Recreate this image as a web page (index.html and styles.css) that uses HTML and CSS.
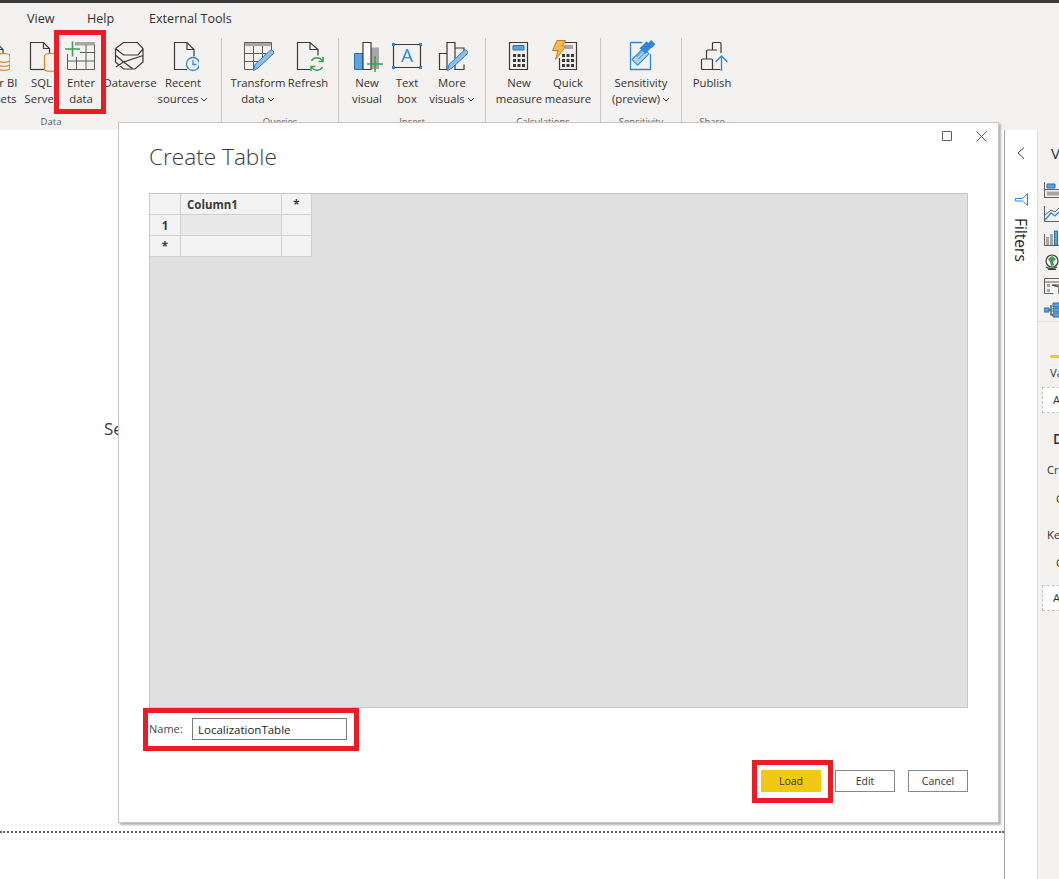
FILE: index.html
```html
<!DOCTYPE html>
<html lang="en">
<head>
  <meta charset="UTF-8" />
  <title>Create Table</title>
  <link rel="stylesheet" href="styles.css">
</head>
<body>
<div class="app">
  <div class="topbar"></div>

  <nav class="tabs">
    <span class="tab tab-view">View</span>
    <span class="tab tab-help">Help</span>
    <span class="tab tab-tools">External Tools</span>
  </nav>

  <div class="ribbon">
    <section class="group group-data">
      <div class="buttons">
        <div class="btn btn-powerbi">
          <svg class="icon" viewBox="0 0 32 32"><path class="ink" d="M6 29.500V2.500h12l7 7v7"/><path class="ink" d="M18 2.500v7h7"/><g class="orange"><ellipse cx="26" cy="16" rx="6" ry="2.500"/><path d="M20 16v12c0 3 12 3 12 0V16M20 20c0 3 12 3 12 0M20 24c0 3 12 3 12 0"/></g></svg>
          <span>Power BI<br>datasets</span>
        </div>
        <div class="btn btn-sql">
          <svg class="icon" viewBox="0 0 32 32"><path class="ink" d="M6.500 29.500V2.500h13l6 6v6"/><path class="ink" d="M19.500 2.500v6h6"/><path class="ink" d="M6.500 29.500h14"/><g class="orange"><ellipse cx="27" cy="16" rx="6.500" ry="2.500"/><path d="M20.500 16v13c0 3 13 3 13 0V16"/></g></svg>
          <span>SQL<br>Server</span>
        </div>
        <div class="btn btn-enter">
          <svg class="icon" viewBox="0 0 32 32"><path class="fill-gray" d="M10 2h20v3.500H10z"/><path class="thin" d="M2.500 14v15.500h27V5M15 12.500h14.500M2.500 21h27M11.500 17v12.500M21 5v24.500"/><path class="green" d="M0 9h15M7.500 1.500v15"/></svg>
          <span>Enter<br>data</span>
        </div>
        <div class="btn btn-dataverse">
          <svg class="icon" viewBox="0 0 32 32"><path class="ink" d="M9.500 2.500h14l5.500 6v13.500l-8 7h-11.500l-8-7V8.500zM2 9l7.500 6H24l5-6M2 15.500L9.500 22 29 15.500M9.500 22L2 27M9.500 22l9 6.500"/></svg>
          <span>Dataverse</span>
        </div>
        <div class="btn btn-recent">
          <svg class="icon" viewBox="0 0 32 32"><path class="ink" d="M20 29.500H7.500v-27H20l7 7v7"/><path class="ink" d="M20 2.500v7h7"/><circle class="blue" cx="26" cy="24" r="6.500"/><path class="blue" d="M26 20v4.500h3.500"/></svg>
          <span>Recent<br>sources<svg class="chev" viewBox="0 0 8 5"><path d="M1 1l3 3 3-3"/></svg></span>
        </div>
      </div>
      <div class="group-label">Data</div>
    </section>

    <section class="group group-queries">
      <div class="buttons">
        <div class="btn btn-transform">
          <svg class="icon" viewBox="0 0 32 32"><path class="fill-gray" d="M2 2h28v4H2z"/><path class="thin" d="M2.500 2.500h27V10M2.500 2.500v27H11M2.500 13.500H24M2.500 21.500H18M11.500 6v23M20.500 6v12"/><path class="pencil" d="M11.500 30.500l1.500-6 15-14c2-1.500 5 1 3 3.500l-15 14z"/></svg>
          <span>Transform<br>data<svg class="chev" viewBox="0 0 8 5"><path d="M1 1l3 3 3-3"/></svg></span>
        </div>
        <div class="btn btn-refresh">
          <svg class="icon" viewBox="0 0 32 32"><path class="ink" d="M18 29.500H5.500v-27H18l8 7v6"/><path class="ink" d="M18 2.500v7h8"/><path class="green-thin" d="M19.500 21c2-4 8.500-4.500 11 0M31 17v4.500h-4.500M30.500 27c-2 4-8.500 4.500-11 0M19 31v-4.500h4.500"/></svg>
          <span>Refresh</span>
        </div>
      </div>
      <div class="group-label">Queries</div>
    </section>

    <section class="group group-insert">
      <div class="buttons">
        <div class="btn btn-visual">
          <svg class="icon" viewBox="0 0 32 32"><path class="fill-gray" d="M20 7.500h8V29h-8z"/><path class="ink-blue" d="M3.500 13.500H12v16H3.500z"/><path class="ink-white" d="M12 2.500h8v27h-8z"/><path class="green" d="M16 24h16M24 16v16"/></svg>
          <span>New<br>visual</span>
        </div>
        <div class="btn btn-textbox">
          <svg class="icon" viewBox="0 0 32 32"><path class="ink" d="M2.500 4.500h27v23h-27z"/><path class="handle" d="M1 3h3v3H1zM28 3h3v3h-3zM1 26h3v3H1zM28 26h3v3h-3z"/><text class="icon-letter" x="16" y="22" text-anchor="middle">A</text></svg>
          <span>Text<br>box</span>
        </div>
        <div class="btn btn-more">
          <svg class="icon" viewBox="0 0 32 32"><path class="ink" d="M11 29.500H3.500v-16H11M11 29.500V2.500h8v16M19 8h9v7M19 24v5.500h9v-5"/><path class="pencil" d="M11.500 30.500l1.500-6 15-14c2-1.500 5 1 3 3.500l-15 14z"/></svg>
          <span>More<br>visuals<svg class="chev" viewBox="0 0 8 5"><path d="M1 1l3 3 3-3"/></svg></span>
        </div>
      </div>
      <div class="group-label">Insert</div>
    </section>

    <section class="group group-calc">
      <div class="buttons">
        <div class="btn btn-measure">
          <svg class="icon" viewBox="0 0 32 32"><path class="ink" d="M6.500 2.500h18v27h-18z"/><path class="ink-blue" d="M10 5.500h11V10H10z"/><path class="dots" d="M10 14h3v3h-3zM14.500 14h3v3h-3zM19 14h3v3h-3zM10 19h3v3h-3zM14.500 19h3v3h-3zM19 19h3v3h-3zM10 24h3v3h-3zM14.500 24h3v3h-3zM19 24h3v3h-3z"/></svg>
          <span>New<br>measure</span>
        </div>
        <div class="btn btn-quick">
          <svg class="icon" viewBox="0 0 32 32"><path class="ink" d="M9 2.500h15.500v27H7.500V18"/><path class="fill-gray" d="M13 5h8v4h-8z"/><path class="dots" d="M10 14h3v3h-3zM14.500 14h3v3h-3zM19 14h3v3h-3zM10 19h3v3h-3zM14.500 19h3v3h-3zM19 19h3v3h-3zM10 24h3v3h-3zM14.500 24h3v3h-3zM19 24h3v3h-3z"/><path class="bolt" d="M5 .5h8.500l-3 5.500h3.500L3.500 19.500 6 10.500H.5z"/></svg>
          <span>Quick<br>measure</span>
        </div>
      </div>
      <div class="group-label">Calculations</div>
    </section>

    <section class="group group-sens">
      <div class="buttons">
        <div class="btn btn-sens">
          <svg class="icon" viewBox="0 0 32 32"><path class="blue" d="M5.500 2.500h12M25.500 14v15.500h-20v-27"/><rect class="tag" x="7.500" y="12.700" width="16" height="8" transform="rotate(-45 15.500 16.700)"/><path class="tag-line" d="M11.500 17l6.500-6.500M13.500 19l6.500-6.500"/><rect class="tag-dark" x="16" y="3.500" width="10" height="8" transform="rotate(-45 21 7.500)"/><rect class="tag-dark" x="24" y="1" width="5" height="6" transform="rotate(-45 26.500 4)"/></svg>
          <span>Sensitivity<br>(preview)<svg class="chev" viewBox="0 0 8 5"><path d="M1 1l3 3 3-3"/></svg></span>
        </div>
      </div>
      <div class="group-label">Sensitivity</div>
    </section>

    <section class="group group-share">
      <div class="buttons">
        <div class="btn btn-publish">
          <svg class="icon" viewBox="0 0 32 32"><path class="ink" d="M6.500 19h9a1 1 0 0 1 1 1v9.500h-10a1 1 0 0 1-1-1V20a1 1 0 0 1 1-1zM10.500 19v-8a1 1 0 0 1 1-1h9.500M16.500 10V3.500a1 1 0 0 1 1-1h6.500a1 1 0 0 1 1 1V13M16.500 29.500h8"/><path class="blue" d="M25.500 31V16M19.500 22l6-6 6 6"/></svg>
          <span>Publish</span>
        </div>
      </div>
      <div class="group-label">Share</div>
    </section>
  </div>

  <main class="main">
    <div class="canvas">
      <div class="report-page">
        <p class="placeholder">Select or drag fields</p>
      </div>
    </div>

    <aside class="filters">
      <svg class="filters-chevron" viewBox="0 0 8 12"><path d="M7 .5L1 6l6 5.500"/></svg>
      <svg class="filters-funnel" viewBox="0 0 13 13"><path d="M12.500 .5v12L7.500 8H.5V5.500h7z"/></svg>
      <span class="filters-title">Filters</span>
    </aside>

    <aside class="viz">
      <h2 class="viz-title">Visualizations</h2>
      <div class="viz-icons">
        <svg class="viz-icon" viewBox="0 0 22 16"><path class="thin" d="M.5 0v16M.5 7.500h21M.5 15.500h21"/><path class="ink-blue" d="M3 2h8v4H3z"/><path class="fill-gray" d="M3 9.500h14v4H3z"/></svg>
        <svg class="viz-icon" viewBox="0 0 22 16"><path class="thin" d="M.5 0v15.500H22"/><path class="blue" d="M1 14l6-7 4 3 5-5 6 4"/><path class="thin" d="M1 9l6-5 4 2 5-5 6 4"/></svg>
        <svg class="viz-icon" viewBox="0 0 22 16"><path class="thin" d="M.5 4v11.500H22"/><path class="fill-gray" d="M2 7h3v8H2zM6 4h3v11H6z"/><path class="ink-blue" d="M10.500 1h3v14h-3z"/></svg>
        <svg class="viz-icon" viewBox="0 0 22 16"><circle class="ink" cx="8" cy="7" r="6"/><path class="globe" d="M4 5l4-3 4 3-3 3 1 3-3 1-1-4z"/><path class="ink" d="M2 13c3 2 8 2 11 0M8 14v2M4 15.500h8"/></svg>
        <svg class="viz-icon" viewBox="0 0 22 16"><path class="thin" d="M.5.500h21M.5.500v15h9M.5 4h21"/><path class="dots-gray" d="M3 6h3v3H3zM3 11h3v3H3z"/><path class="ink-white" d="M8 7h14v2h-4v7h-3V9z"/></svg>
        <svg class="viz-icon" viewBox="0 0 22 16"><path class="ink-blue" d="M0 6h5v4H0zM9 1h14v4H9zM9 6h14v4H9zM9 11h14v4H9z"/><path class="ink" d="M5 8h2M7 3v10h2"/></svg>
      </div>
      <div class="viz-fields">
        <div class="viz-tab"></div>
        <div class="field-label">Values</div>
        <div class="well">Add data fields here</div>
        <h3 class="drill-title">Drill through</h3>
        <div class="drill-label">Cross-report</div>
        <div class="toggle-label">Off</div>
        <div class="drill-label drill-keep">Keep all filters</div>
        <div class="toggle-label toggle-on">On</div>
        <div class="well well-drill">Add drill-through fields here</div>
      </div>
    </aside>
  </main>

  <div class="dialog">
    <div class="win-controls">
      <svg class="win-icon" viewBox="0 0 10 10"><path d="M.5.500h9v9h-9z"/></svg>
      <svg class="win-icon win-close" viewBox="0 0 11 11"><path d="M.5.500l10 10M10.500.500l-10 10"/></svg>
    </div>
    <h1 class="dialog-title">Create Table</h1>

    <div class="grid-area">
      <table class="grid">
        <tr><th class="col-head"></th><th class="col-name">Column1</th><th class="col-add">*</th></tr>
        <tr><th>1</th><td class="cell-active"></td><td></td></tr>
        <tr><th>*</th><td></td><td></td></tr>
      </table>
    </div>

    <div class="name-row">
      <label class="name-label">Name:</label>
      <div class="name-input">LocalizationTable</div>
    </div>

    <div class="actions">
      <button class="action action-load">Load</button>
      <button class="action">Edit</button>
      <button class="action">Cancel</button>
    </div>
  </div>

  <div class="mark mark-enter"></div>
  <div class="mark mark-name"></div>
  <div class="mark mark-load"></div>
</div>
</body>
</html>
```

FILE: styles.css
```css
html, body { margin: 0; height: 100%; overflow: hidden; }
body { font-family: "Open Sans", "Noto Sans", sans-serif; font-size: 11.3px; color: #323130; background: #fff; }
.app { position: relative; width: 1059px; height: 879px; display: flex; flex-direction: column; overflow: hidden; }
.topbar { height: 3px; background: #3b3a39; flex: none; }

/* tabs */
.tabs { height: 30px; background: #f3f2f1; display: flex; align-items: center; flex: none; padding-left: 27px; font-size: 12.6px; }
.tab-view { width: 60px; }
.tab-help { width: 62px; }

/* ribbon */
.ribbon { height: 97px; background: #f3f2f1; display: flex; flex: none; }
.group { display: flex; flex-direction: column; border-right: 1px solid #c8c6c4; margin: 5px 0 0; height: 92px; flex: none; box-sizing: content-box; }
.group-data { margin-left: -119px; width: 340px; }
.group-queries { width: 116px; }
.group-insert { width: 146px; }
.group-calc { width: 114px; }
.group-sens { width: 80px; }
.group-share { width: 60px; border-right: 0; }
.buttons { display: flex; height: 75px; padding-top: 2px; }
.group-data .buttons { padding-left: 89px; }
.group-queries .buttons { padding-left: 6px; }
.group-insert .buttons { padding-left: 8px; }
.group-calc .buttons { padding-left: 8px; }
.group-label { text-align: center; font-size: 9.5px; color: #605e5c; line-height: 14px; }
.btn { display: flex; flex-direction: column; align-items: center; text-align: center; line-height: 16px; flex: none; white-space: nowrap; }
.btn > span { margin-top: 3px; }
.icon { width: 32px; height: 32px; flex: none; }
.btn-powerbi { width: 48px; }
.btn-sql { width: 44px; }
.btn-sql > span { margin-left: 3px; }
.btn-enter { width: 38px; }
.btn-dataverse { width: 60px; }
.btn-recent { width: 46px; }
.btn-transform { width: 60px; }
.btn-refresh { width: 40px; }
.btn-visual { width: 40px; }
.btn-textbox { width: 40px; }
.btn-more { width: 50px; }
.btn-measure { width: 50px; }
.btn-quick { width: 48px; }
.btn-sens { width: 80px; }
.btn-publish { width: 60px; }
.chev { width: 8px; height: 5px; margin-left: 2px; vertical-align: 1px; fill: none; stroke: #323130; stroke-width: 1; }

/* icon paint */
.ink { fill: none; stroke: #3b3a39; stroke-width: 1.2; }
.thin { fill: none; stroke: #605e5c; stroke-width: 1; }
.orange { fill: #f3f2f1; stroke: #d9822b; stroke-width: 1.2; }
.green { fill: none; stroke: #3f9d58; stroke-width: 1.6; }
.green-thin { fill: none; stroke: #3f9d58; stroke-width: 1.5; }
.blue { fill: none; stroke: #2b88d8; stroke-width: 1.3; }
.fill-gray { fill: #a8a6a4; }
.pencil { fill: #8fbfe8; stroke: #2b7cc4; stroke-width: 1; }
.ink-blue { fill: #5ba3e0; stroke: #2f6fa8; stroke-width: 1; }
.ink-white { fill: #fff; stroke: #3b3a39; stroke-width: 1.2; }
.handle { fill: #2b88d8; }
.icon-letter { font-size: 19px; fill: #2b88d8; font-family: "Open Sans", sans-serif; }
.dots { fill: #3b3a39; }
.dots-gray { fill: #a8a6a4; }
.bolt { fill: #f7b955; stroke: #d9711b; stroke-width: 1; }
.tag { fill: #a9d2f3; stroke: #2b88d8; stroke-width: 1; }
.tag-line { fill: none; stroke: #2b88d8; stroke-width: 1; }
.tag-dark { fill: #2b88d8; }
.globe { fill: #3f9d58; }

/* page behind the dialog */
.main { flex: 1; display: flex; min-height: 0; }
.canvas { width: 1005px; flex: none; background: #fff; border-right: 1px solid #a8a6a4; box-sizing: border-box; }
.report-page { height: 701px; border-bottom: 2px dotted #605e5c; display: flex; align-items: center; padding-left: 104px; }
.placeholder { margin: 0 0 104px; font-size: 17px; white-space: nowrap; color: #3b3a39; }

.filters { width: 32px; flex: none; border-right: 1px solid #e1dfdd; background: #fff; display: flex; flex-direction: column; align-items: center; }
.filters-chevron { width: 8px; height: 12px; margin-top: 17px; flex: none; fill: none; stroke: #3b3a39; stroke-width: 1; }
.filters-funnel { width: 13px; height: 13px; margin-top: 34px; flex: none; fill: none; stroke: #2b88d8; stroke-width: 1; }
.filters-title { writing-mode: vertical-rl; font-size: 15.5px; margin-top: 12px; line-height: 16px; color: #201f1e; }

.viz { flex: 1; background: #f3f2f1; min-width: 0; overflow: hidden; }
.viz-title { margin: 12px 0 0 13px; font-size: 15px; font-weight: 400; line-height: 22px; white-space: nowrap; }
.viz-icons { display: flex; flex-direction: column; gap: 8px; padding: 18px 0 0 6px; height: 158px; border-bottom: 1px solid #e1dfdd; box-sizing: border-box; overflow: hidden; }
.viz-icon { width: 22px; height: 16px; flex: none; }
.viz-fields { padding-top: 33px; width: 200px; }
.viz-tab { width: 30px; height: 3px; margin-left: 12px; background: #f2c811; border-radius: 2px; }
.field-label { margin: 7px 0 0 12px; line-height: 16px; white-space: nowrap; }
.well { margin: 6px 0 0 4px; height: 26px; background: #fff; border: 1px dashed #c8c6c4; box-sizing: border-box; padding-left: 10px; line-height: 24px; white-space: nowrap; }
.drill-title { margin: 16px 0 0 15px; font-size: 14px; font-weight: 600; line-height: 20px; white-space: nowrap; }
.drill-label { margin: 13px 0 0 9px; line-height: 16px; white-space: nowrap; }
.toggle-label { margin: 13px 0 0 18px; line-height: 16px; }
.drill-keep { margin-top: 20px; }
.toggle-on { margin-top: 12px; }
.well-drill { margin-top: 14px; }

/* dialog */
.dialog { position: absolute; left: 118px; top: 122px; width: 881px; height: 701px; box-sizing: border-box; background: #fff; border: 1px solid #c8c6c4; box-shadow: 2px 2px 2px #b5b3b1; padding: 0 30px 30px 30px; display: flex; flex-direction: column; }
.win-controls { display: flex; justify-content: flex-end; align-items: flex-start; gap: 24px; margin-right: -19px; padding-top: 8px; height: 10px; flex: none; }
.win-icon { width: 10px; height: 10px; fill: none; stroke: #605e5c; stroke-width: 1; }
.win-close { width: 11px; height: 11px; }
.dialog-title { margin: 0 0 20px; font-size: 22.6px; font-weight: 300; line-height: 32px; color: #3b3a39; flex: none; }

.grid-area { flex: 1; min-height: 0; background: #e0e0e0; border: 1px solid #c8c6c4; }
.grid { border-collapse: collapse; table-layout: fixed; width: 161px; font-size: 11.5px; }
.grid th, .grid td { height: 20px; padding: 0; background: #f3f3f3; border-right: 1px solid #d0d0d0; border-bottom: 1px solid #d0d0d0; }
.grid th { font-weight: 700; color: #3b3a39; text-align: center; }
.col-head { width: 30px; }
.grid .col-name { width: 100px; text-align: left; text-indent: 6px; }
.col-add { width: 29px; }
.grid .cell-active { background: #e8e8e8; }

.name-row { display: flex; align-items: center; height: 22px; margin-top: 10px; flex: none; }
.name-label { width: 43px; font-size: 11px; color: #484644; margin-top: -2px; }
.name-input { width: 155px; height: 22px; box-sizing: border-box; border: 1px solid #7a7a7a; padding-left: 5px; line-height: 21px; font-size: 11.5px; color: #201f1e; }

.actions { display: flex; justify-content: flex-end; margin-top: 30px; gap: 13px; flex: none; }
.action { width: 60px; height: 22px; padding: 0; font: 10.5px "Open Sans", "Noto Sans", sans-serif; color: #323130; background: #fff; border: 1px solid #8a8886; }
.action-load { background: #f2c811; border-color: #f2c811; margin-right: 1px; }

/* red highlight boxes drawn over the screenshot */
.mark { position: absolute; box-sizing: border-box; border: 5px solid #ed1c24; }
.mark-enter { left: 54px; top: 30px; width: 52px; height: 84px; }
.mark-name { left: 143px; top: 708px; width: 216px; height: 43px; }
.mark-load { left: 752px; top: 760px; width: 81px; height: 43px; }
```
